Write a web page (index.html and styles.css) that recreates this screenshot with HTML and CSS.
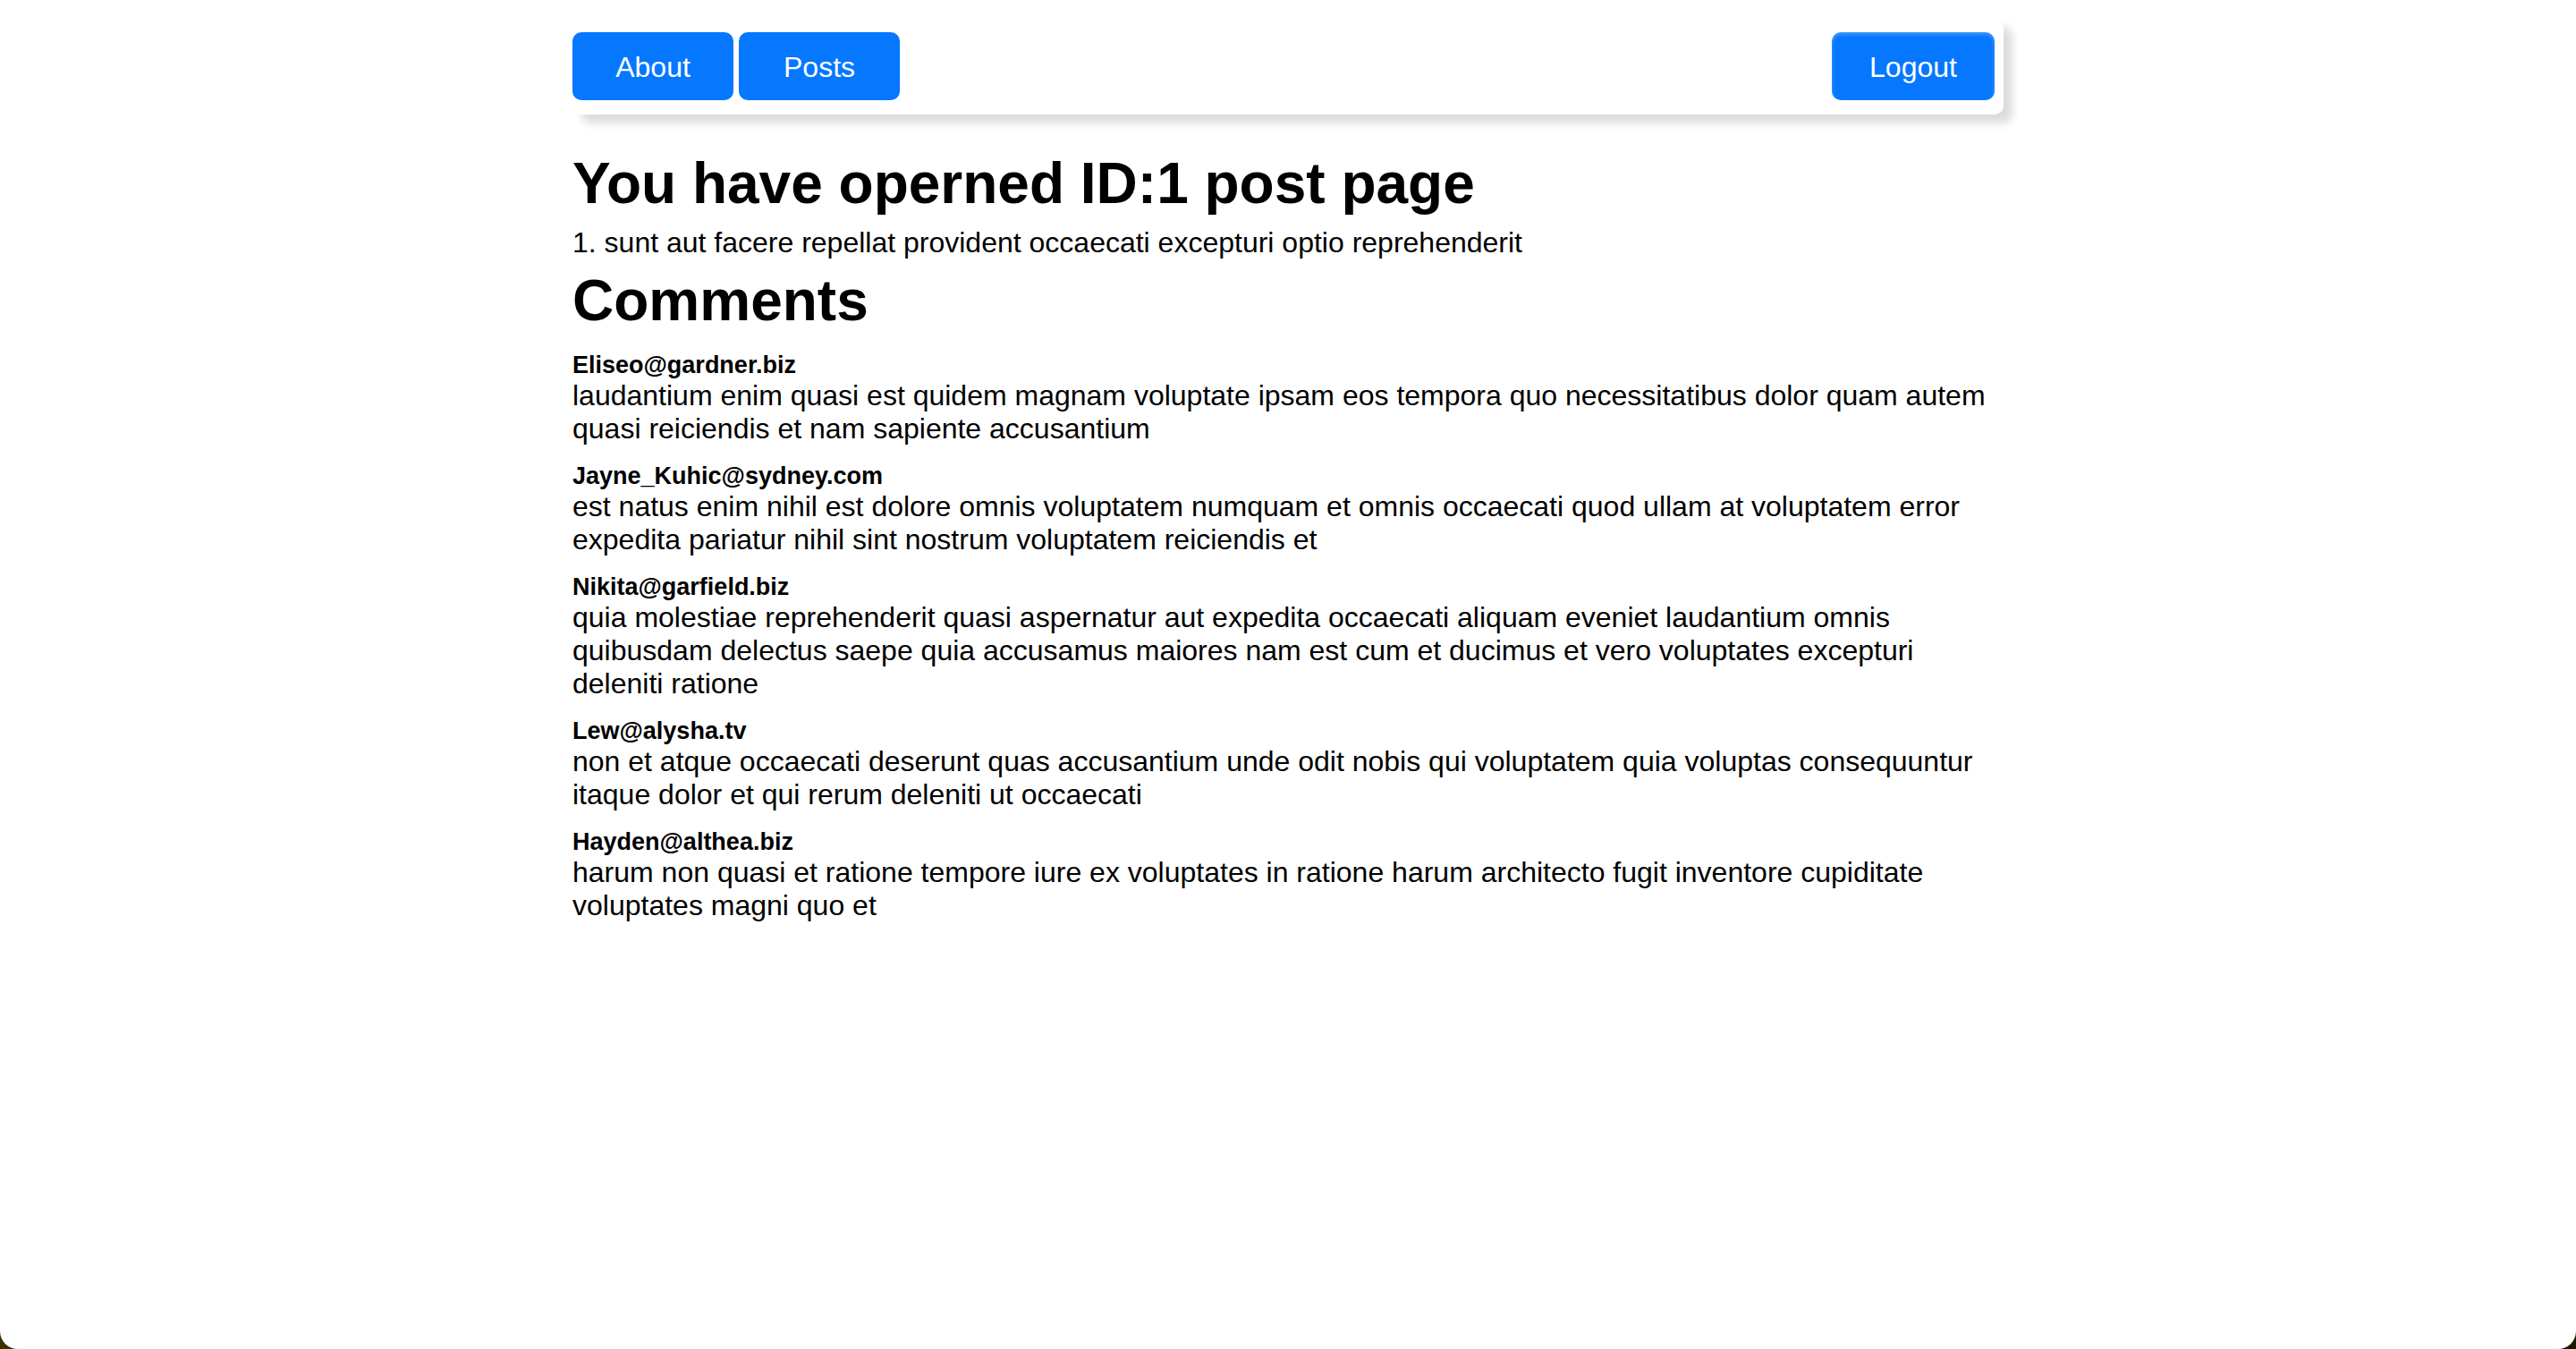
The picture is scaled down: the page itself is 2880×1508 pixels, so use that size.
FILE: index.html
```html
<!DOCTYPE html>
<html lang="en">
<head>
<meta charset="utf-8">
<title>Post</title>
<link rel="stylesheet" href="styles.css">
</head>
<body>
<div class="app">
  <header class="navbar">
    <nav class="navbar-links">
      <a class="btn" href="#about">About</a>
      <a class="btn" href="#posts">Posts</a>
    </nav>
    <button class="btn btn-logout" type="button">Logout</button>
  </header>
  <main class="post">
    <h1>You have operned ID:1 post page</h1>
    <p class="post-title">1. sunt aut facere repellat provident occaecati excepturi optio reprehenderit</p>
    <h1>Comments</h1>
    <section class="comments">
      <article class="comment">
        <h5>Eliseo@gardner.biz</h5>
        <p>laudantium enim quasi est quidem magnam voluptate ipsam eos tempora quo necessitatibus dolor quam autem quasi reiciendis et nam sapiente accusantium</p>
      </article>
      <article class="comment">
        <h5>Jayne_Kuhic@sydney.com</h5>
        <p>est natus enim nihil est dolore omnis voluptatem numquam et omnis occaecati quod ullam at voluptatem error expedita pariatur nihil sint nostrum voluptatem reiciendis et</p>
      </article>
      <article class="comment">
        <h5>Nikita@garfield.biz</h5>
        <p>quia molestiae reprehenderit quasi aspernatur aut expedita occaecati aliquam eveniet laudantium omnis quibusdam delectus saepe quia accusamus maiores nam est cum et ducimus et vero voluptates excepturi deleniti ratione</p>
      </article>
      <article class="comment">
        <h5>Lew@alysha.tv</h5>
        <p>non et atque occaecati deserunt quas accusantium unde odit nobis qui voluptatem quia voluptas consequuntur itaque dolor et qui rerum deleniti ut occaecati</p>
      </article>
      <article class="comment">
        <h5>Hayden@althea.biz</h5>
        <p>harum non quasi et ratione tempore iure ex voluptates in ratione harum architecto fugit inventore cupiditate voluptates magni quo et</p>
      </article>
    </section>
  </main>
</div>
</body>
</html>
```
FILE: styles.css
```css
* {
  box-sizing: border-box;
  margin: 0;
  padding: 0;
}

html {
  background: linear-gradient(to right, #3a3000, #1c1800);
}

body {
  min-height: 100vh;
  padding: 20px;
  background: #fff;
  border-radius: 0 0 20px 20px;
  color: #000;
  font-family: Helvetica, "Liberation Sans", Arial, sans-serif;
  font-size: 32px;
  line-height: 37px;
}

.app {
  max-width: 1600px;
  margin: 0 auto;
}

.navbar {
  display: flex;
  align-items: center;
  justify-content: space-between;
  padding: 16px 10px 16px 0;
  border-radius: 10px;
  box-shadow: 10px 10px 10px rgba(0, 0, 0, 0.14);
}

.navbar-links {
  display: flex;
  gap: 6px;
}

.btn {
  min-width: 180px;
  height: 76px;
  border: 0;
  border-radius: 10px;
  background: #0677ff;
  color: #fff;
  font: inherit;
  line-height: 78px;
  text-align: center;
  text-decoration: none;
  cursor: pointer;
}

.btn-logout {
  min-width: 182px;
  box-shadow: inset 0 2px 4px rgba(255, 255, 255, 0.3);
}

.post {
  padding-top: 40px;
}

h1 {
  font-size: 64px;
  line-height: 74px;
}

.post-title {
  padding: 11px 0 9px;
}

.comments {
  display: flex;
  flex-direction: column;
  gap: 19px;
  padding-top: 20px;
}

h5 {
  font-size: 27px;
  line-height: 31px;
}
```
